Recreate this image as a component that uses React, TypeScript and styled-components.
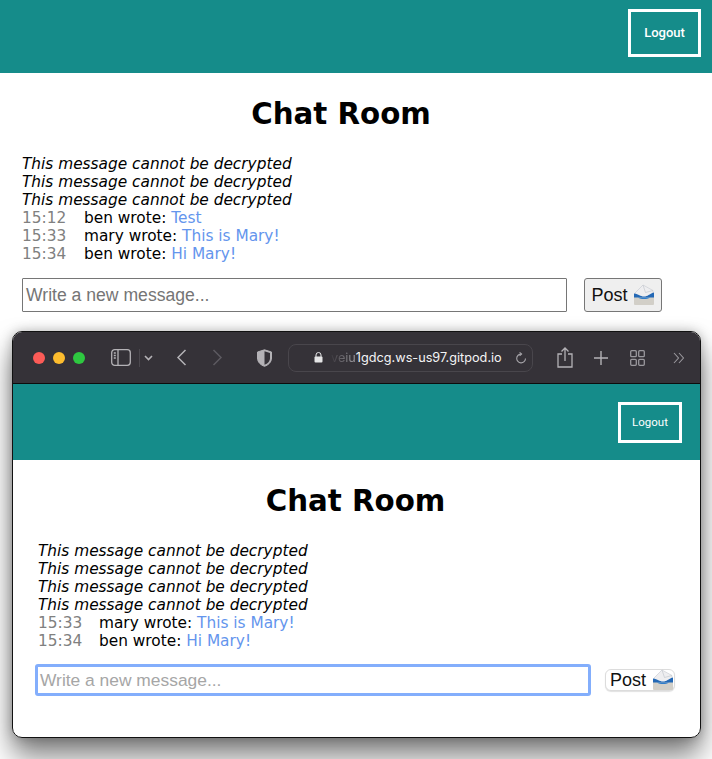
import React from 'react';
import styled, { createGlobalStyle } from 'styled-components';

const Global = createGlobalStyle`
  html, body { margin: 0; padding: 0; background: #fff; overflow: hidden; }
  * { box-sizing: border-box; }
`;

const Page = styled.div`
  width: 712px;
  height: 759px;
  overflow: hidden;
  background: #fff;
  font-family: "DejaVu Sans", sans-serif;
`;

const TopChat = styled.section`
  height: 331px;
`;

const Header = styled.header<{ $h: number; $pad: number }>`
  height: ${p => p.$h}px;
  background: #158c8a;
  display: flex;
  align-items: center;
  justify-content: flex-end;
  padding-right: ${p => p.$pad}px;
`;

const Logout = styled.button<{ $w: number; $h: number; $size: number; $weight: number; $up: number }>`
  width: ${p => p.$w}px;
  height: ${p => p.$h}px;
  margin-bottom: ${p => p.$up}px;
  border: 3px solid #fff;
  background: transparent;
  color: #fff;
  font-family: "Roboto", sans-serif;
  font-weight: ${p => p.$weight};
  font-size: ${p => p.$size}px;
  padding: 0;
`;

const Body = styled.div<{ $x: number }>`
  padding: 0 0 0 ${p => p.$x}px;
`;

const Title = styled.h1<{ $top: number; $shift: number }>`
  margin: ${p => p.$top}px 0 0 ${p => p.$shift}px;
  text-align: center;
  font-size: 29.3px;
  line-height: 36px;
  font-weight: 700;
  color: #000;
`;

const Messages = styled.div<{ $top: number }>`
  margin-top: ${p => p.$top}px;
  font-size: 15.35px;
  line-height: 18px;
  color: #000;
`;

const Undecrypted = styled.div`
  font-style: italic;
  white-space: nowrap;
`;

const Row = styled.div`
  display: flex;
  white-space: pre;
`;

const Time = styled.span<{ $w: number }>`
  width: ${p => p.$w}px;
  color: #808080;
`;

const Text = styled.span`
  color: #6495ed;
`;

const Form = styled.form<{ $top: number; $gap: number }>`
  display: flex;
  align-items: center;
  gap: ${p => p.$gap}px;
  margin-top: ${p => p.$top}px;
`;

const Input = styled.div<{ $w: number; $h: number; $focus?: boolean }>`
  width: ${p => p.$w}px;
  height: ${p => p.$h}px;
  margin-left: ${p => (p.$focus ? '-3px' : '0')};
  border: ${p => (p.$focus ? '3px solid #83aefc' : '1px solid #767676')};
  border-radius: ${p => (p.$focus ? '3px' : '1px')};
  background: #fff;
  display: flex;
  align-items: center;
  padding-left: ${p => (p.$focus ? '2px' : '3px')};
  color: ${p => (p.$focus ? '#a6a6a6' : '#757575')};
  font-family: "Liberation Sans", sans-serif;
  font-size: ${p => (p.$focus ? '17.4px' : '17.6px')};
`;

const Post = styled.button<{ $w: number; $h: number; $flat?: boolean }>`
  width: ${p => p.$w}px;
  height: ${p => p.$h}px;
  display: flex;
  align-items: center;
  justify-content: ${p => (p.$flat ? 'flex-end' : 'center')};
  gap: ${p => (p.$flat ? '6px' : '5px')};
  padding: 0 ${p => (p.$flat ? '0' : '0')};
  border: ${p => (p.$flat ? '1px solid #dcdcdc' : '1px solid #767676')};
  border-radius: ${p => (p.$flat ? '6px' : '3px')};
  background: ${p => (p.$flat ? '#fff' : '#efefef')};
  box-shadow: ${p => (p.$flat ? '0 1px 1px rgba(0,0,0,.12)' : 'none')};
  color: #111;
  font-family: "Liberation Sans", sans-serif;
  font-size: 18px;
`;

const Window = styled.section`
  width: 689px;
  height: 407px;
  background: #fff;
  border: 1px solid #111;
  border-radius: 10px;
  overflow: hidden;
`;

const Shadowed = styled.div`
  width: 689px;
  margin-left: 12px;
  border-radius: 10px;
  box-shadow: 0 18px 28px rgba(0, 0, 0, 0.5), 0 0 12px rgba(0, 0, 0, 0.25);
`;

const Toolbar = styled.div`
  height: 52px;
  background: #353238;
  border-bottom: 1px solid #0c0c0c;
  display: flex;
  align-items: center;
  padding-left: 20px;
  color: #b4b2b6;
`;

const Light = styled.span<{ $c: string }>`
  width: 12px;
  height: 12px;
  margin-right: 8px;
  border-radius: 50%;
  background: ${p => p.$c};
`;

const Tool = styled.svg<{ $ml: number }>`
  flex: none;
  margin-left: ${p => p.$ml}px;
  display: block;
`;

const Divider = styled.span`
  width: 1px;
  height: 18px;
  margin-left: 8px;
  background: #4b484e;
`;

const Address = styled.div`
  width: 245px;
  height: 28px;
  margin-left: 16px;
  border: 1px solid #49464c;
  border-radius: 8px;
  display: flex;
  align-items: center;
  padding-left: 25px;
  font-family: "Inter", sans-serif;
  font-size: 12.7px;
  color: #f4f4f5;
  white-space: nowrap;
`;

const Faded = styled.span`
  background: linear-gradient(90deg, #3c393f, #a09ea3);
  -webkit-background-clip: text;
  background-clip: text;
  color: transparent;
`;

const Envelope = () => (
  <svg width="22" height="22" viewBox="0 0 22 22">
    <path d="M2 9 L10 1 L20 6.5 L20 14 L2 14 Z" fill="#eeeef0" stroke="#c4c8cf" strokeWidth=".6" />
    <path d="M10 1 L12.5 8.5 L20 6.5" fill="none" stroke="#c4c8cf" strokeWidth=".7" />
    <path d="M1 9.5 C6 10 7 12.5 11 12.5 C15 12.5 16 10 21 8.5 L21 15 L1 15 Z" fill="#2368b5" />
    <path d="M1 13.5 L21 13.5 L21 20 Q21 21 20 21 L2 21 Q1 21 1 20 Z" fill="#d2cfc8" />
    <path d="M5 13.5 C8 15.5 14 15.5 17 13.5 Z" fill="#2f7cc9" />
  </svg>
);

type Msg = { time: string; who: string; text: string };

const Chat = ({ hidden, list, timeW }: { hidden: number; list: Msg[]; timeW: number }) => (
  <>
    {Array.from({ length: hidden }, (_, i) => (
      <Undecrypted key={i}>This message cannot be decrypted</Undecrypted>
    ))}
    {list.map(m => (
      <Row key={m.time}>
        <Time $w={timeW}>{m.time}</Time>
        <span>{m.who} wrote: </span>
        <Text>{m.text}</Text>
      </Row>
    ))}
  </>
);

export default function App() {
  return (
    <Page>
      <Global />
      <TopChat>
        <Header $h={73} $pad={11}>
          <Logout $w={73} $h={48} $size={13} $weight={500} $up={8}>Logout</Logout>
        </Header>
        <Title $top={23} $shift={-30}>Chat Room</Title>
        <Body $x={22}>
          <Messages $top={23}>
            <Chat
              hidden={3}
              timeW={62}
              list={[
                { time: '15:12', who: 'ben', text: 'Test' },
                { time: '15:33', who: 'mary', text: 'This is Mary!' },
                { time: '15:34', who: 'ben', text: 'Hi Mary!' },
              ]}
            />
          </Messages>
          <Form $top={15} $gap={17}>
            <Input $w={545} $h={34}>Write a new message...</Input>
            <Post $w={78} $h={34}>Post <Envelope /></Post>
          </Form>
        </Body>
      </TopChat>
      <Shadowed>
        <Window>
          <Toolbar>
            <Light $c="#fc5b57" />
            <Light $c="#fdbc2e" />
            <Light $c="#2ec840" />
            <Tool $ml={18} width="20" height="17" viewBox="0 0 20 17" fill="none" stroke="currentColor" strokeWidth="1.3">
              <rect x=".7" y=".7" width="18.6" height="15.6" rx="3" />
              <path d="M7 1v15" />
              <path d="M2.8 4h2M2.8 6.5h2M2.8 9h2" />
            </Tool>
            <Divider />
            <Tool $ml={4} width="9" height="6" viewBox="0 0 9 6" fill="none" stroke="currentColor" strokeWidth="1.6">
              <path d="M1 1l3.5 3.5L8 1" />
            </Tool>
            <Tool $ml={23} width="11" height="17" viewBox="0 0 11 17" fill="none" stroke="currentColor" strokeWidth="1.5">
              <path d="M9.5 1L2 8.5 9.5 16" />
            </Tool>
            <Tool $ml={25} width="11" height="17" viewBox="0 0 11 17" fill="none" stroke="#5d5a60" strokeWidth="1.5">
              <path d="M1.5 1L9 8.5 1.5 16" />
            </Tool>
            <Tool $ml={34} width="15" height="18" viewBox="0 0 15 18">
              <path d="M7.5 .8L14.5 3v6c0 4-3 7-7 8.3C3.5 16 .5 13 .5 9V3z" fill="#b4b2b6" />
              <path d="M7.5 2.2L13 3.9V9c0 3.2-2.3 5.7-5.5 6.8z" fill="#353238" />
              <path d="M7.5 .8L14.5 3v6c0 4-3 7-7 8.3C3.5 16 .5 13 .5 9V3z" fill="none" stroke="#b4b2b6" />
            </Tool>
            <Address>
              <svg width="9" height="11" viewBox="0 0 9 11" fill="#e5e5e6" style={{ marginRight: 8, flex: 'none' }}>
                <rect x=".5" y="4.5" width="8" height="6" rx="1" />
                <path d="M2 5V3a2.5 2.5 0 015 0v2" fill="none" stroke="#e5e5e6" />
              </svg>
              <Faded>veiu</Faded>1gdcg.ws-us97.gitpod.io
              <svg width="12" height="12" viewBox="0 0 12 12" fill="none" stroke="#a5a3a8" strokeWidth="1.1" style={{ marginLeft: 13, flex: 'none' }}>
                <path d="M6.3 2.1A4.4 4.4 0 1 0 10.5 6.6" />
                <path d="M4.6 .4L6.6 2.1 4.6 3.9" />
              </svg>
            </Address>
            <Tool $ml={24} width="16" height="21" viewBox="0 0 16 21" fill="none" stroke="currentColor" strokeWidth="1.3">
              <path d="M5 7H1v13h14V7h-4" />
              <path d="M8 14V1M4.5 4.5L8 1l3.5 3.5" />
            </Tool>
            <Tool $ml={21} width="14" height="14" viewBox="0 0 14 14" fill="none" stroke="currentColor" strokeWidth="1.4">
              <path d="M7 0v14M0 7h14" />
            </Tool>
            <Tool $ml={22} width="15" height="16" viewBox="0 0 15 16" fill="none" stroke="#9a989d" strokeWidth="1.3">
              <rect x=".7" y=".7" width="5.6" height="6" rx="1" />
              <rect x="8.7" y=".7" width="5.6" height="6" rx="1" />
              <rect x=".7" y="9.3" width="5.6" height="6" rx="1" />
              <rect x="8.7" y="9.3" width="5.6" height="6" rx="1" />
            </Tool>
            <Tool $ml={28} width="11" height="12" viewBox="0 0 11 12" fill="none" stroke="#9a989d" strokeWidth="1.1">
              <path d="M1 1l4.5 5L1 11M6 1l4.5 5L6 11" />
            </Tool>
          </Toolbar>
          <Header as="div" $h={76} $pad={18}>
            <Logout $w={64} $h={41} $size={11.5} $weight={400} $up={0}>Logout</Logout>
          </Header>
          <Title $top={23} $shift={-2}>Chat Room</Title>
          <Body $x={25}>
            <Messages $top={23}>
              <Chat
                hidden={4}
                timeW={61}
                list={[
                  { time: '15:33', who: 'mary', text: 'This is Mary!' },
                  { time: '15:34', who: 'ben', text: 'Hi Mary!' },
                ]}
              />
            </Messages>
            <Form $top={14} $gap={14}>
              <Input $w={556} $h={32} $focus>Write a new message...</Input>
              <Post $w={70} $h={22} $flat>Post <Envelope /></Post>
            </Form>
          </Body>
        </Window>
      </Shadowed>
    </Page>
  );
}
